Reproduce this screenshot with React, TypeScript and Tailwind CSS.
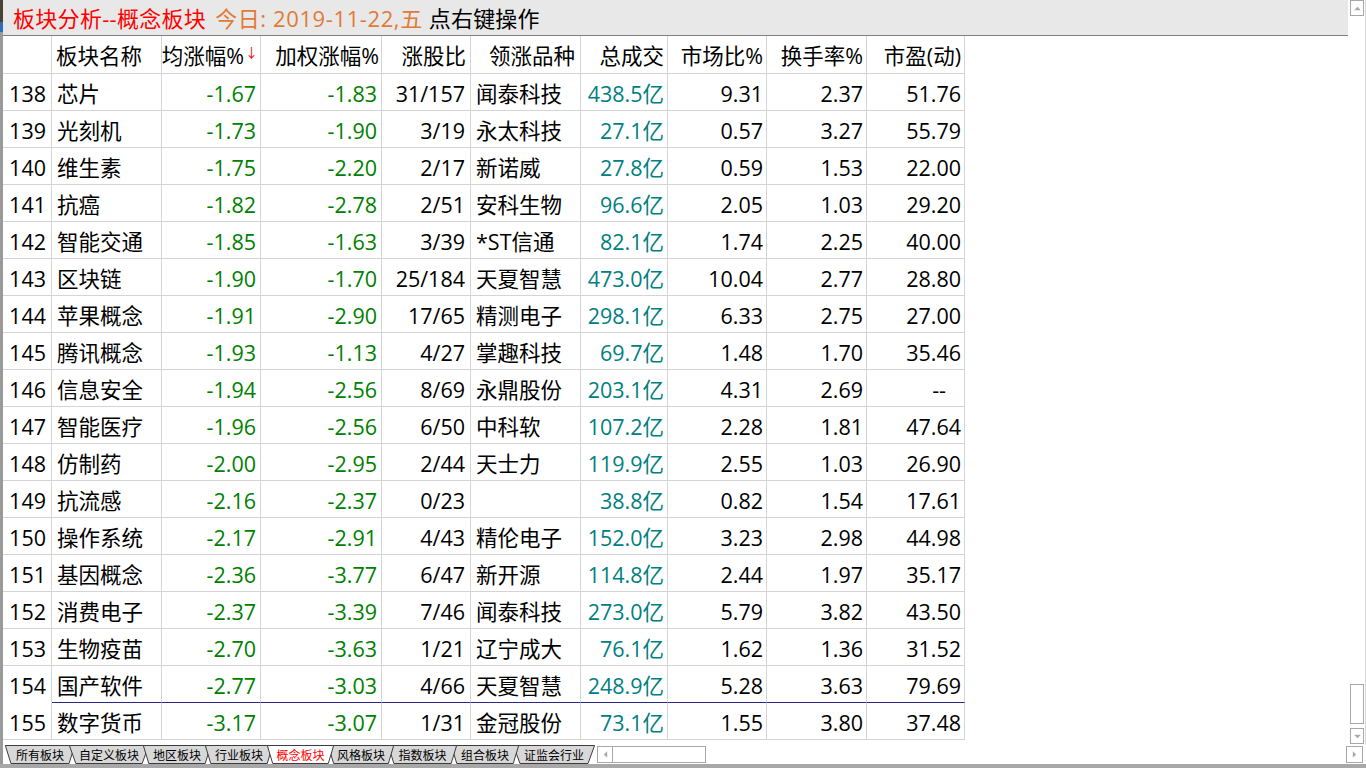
import React from "react";

type Row = [string, string, string, string, string, string, string, string, string, string];

const rows: Row[] = [
  ["138", "芯片", "-1.67", "-1.83", "31/157", "闻泰科技", "438.5亿", "9.31", "2.37", "51.76"],
  ["139", "光刻机", "-1.73", "-1.90", "3/19", "永太科技", "27.1亿", "0.57", "3.27", "55.79"],
  ["140", "维生素", "-1.75", "-2.20", "2/17", "新诺威", "27.8亿", "0.59", "1.53", "22.00"],
  ["141", "抗癌", "-1.82", "-2.78", "2/51", "安科生物", "96.6亿", "2.05", "1.03", "29.20"],
  ["142", "智能交通", "-1.85", "-1.63", "3/39", "*ST信通", "82.1亿", "1.74", "2.25", "40.00"],
  ["143", "区块链", "-1.90", "-1.70", "25/184", "天夏智慧", "473.0亿", "10.04", "2.77", "28.80"],
  ["144", "苹果概念", "-1.91", "-2.90", "17/65", "精测电子", "298.1亿", "6.33", "2.75", "27.00"],
  ["145", "腾讯概念", "-1.93", "-1.13", "4/27", "掌趣科技", "69.7亿", "1.48", "1.70", "35.46"],
  ["146", "信息安全", "-1.94", "-2.56", "8/69", "永鼎股份", "203.1亿", "4.31", "2.69", "--"],
  ["147", "智能医疗", "-1.96", "-2.56", "6/50", "中科软", "107.2亿", "2.28", "1.81", "47.64"],
  ["148", "仿制药", "-2.00", "-2.95", "2/44", "天士力", "119.9亿", "2.55", "1.03", "26.90"],
  ["149", "抗流感", "-2.16", "-2.37", "0/23", "", "38.8亿", "0.82", "1.54", "17.61"],
  ["150", "操作系统", "-2.17", "-2.91", "4/43", "精伦电子", "152.0亿", "3.23", "2.98", "44.98"],
  ["151", "基因概念", "-2.36", "-3.77", "6/47", "新开源", "114.8亿", "2.44", "1.97", "35.17"],
  ["152", "消费电子", "-2.37", "-3.39", "7/46", "闻泰科技", "273.0亿", "5.79", "3.82", "43.50"],
  ["153", "生物疫苗", "-2.70", "-3.63", "1/21", "辽宁成大", "76.1亿", "1.62", "1.36", "31.52"],
  ["154", "国产软件", "-2.77", "-3.03", "4/66", "天夏智慧", "248.9亿", "5.28", "3.63", "79.69"],
  ["155", "数字货币", "-3.17", "-3.07", "1/31", "金冠股份", "73.1亿", "1.55", "3.80", "37.48"],
];

// per-column alignment / colour classes
const colCls = [
  "justify-end pr-[5px] text-black",
  "justify-start pl-[5px] text-black",
  "justify-end pr-[4px] text-[#008000]",
  "justify-end pr-[4px] text-[#008000]",
  "justify-end pr-[5px] text-black",
  "justify-start pl-[5px] text-black",
  "justify-end pr-[3px] text-[#008080]",
  "justify-end pr-[3px] text-black",
  "justify-end pr-[3px] text-black",
  "justify-end pr-[3px] text-black",
];

const tabs = [
  { label: "所有板块", w: "w-[70px]", z: "z-[1]" },
  { label: "自定义板块", w: "w-[80px]", z: "z-[2]" },
  { label: "地区板块", w: "w-[68px]", z: "z-[3]" },
  { label: "行业板块", w: "w-[68px]", z: "z-[4]" },
  { label: "概念板块", w: "w-[67px]", z: "z-[20]", active: true },
  { label: "风格板块", w: "w-[66px]", z: "z-[9]" },
  { label: "指数板块", w: "w-[69px]", z: "z-[8]" },
  { label: "组合板块", w: "w-[68px]", z: "z-[7]" },
  { label: "证监会行业", w: "w-[82px]", z: "z-[6]" },
];

function TabShape({ active }: { active?: boolean }) {
  return (
    <svg className="absolute inset-0 w-full h-full" preserveAspectRatio="none" viewBox="0 0 100 19">
      <polygon
        points="0.5,0.5 99.5,0.5 91.5,18.5 8.5,18.5"
        fill={active ? "#ffffff" : "#d8d8d8"}
        stroke="#3c3c3c"
        strokeWidth="1"
        vectorEffect="non-scaling-stroke"
      />
    </svg>
  );
}

function Arrow({ dir }: { dir: "up" | "down" | "left" | "right" }) {
  const pts =
    dir === "up"
      ? "1,5 5,1 9,5"
      : dir === "down"
      ? "1,1 5,5 9,1"
      : dir === "left"
      ? "5,1 1,5 5,9"
      : "1,1 5,5 1,9";
  const vb = dir === "up" || dir === "down" ? "0 0 10 6" : "0 0 6 10";
  const cls = dir === "up" || dir === "down" ? "w-[9px] h-[5px]" : "w-[5px] h-[9px]";
  return (
    <svg viewBox={vb} className={cls}>
      <polygon points={pts} fill="#a8a8a8" />
    </svg>
  );
}

export default function App() {
  const font = "font-['Open_Sans','Noto_Sans_CJK_SC',sans-serif]";
  return (
    <div className={`w-[1366px] h-[768px] bg-white flex flex-col overflow-hidden ${font}`}>
      {/* upper area */}
      <div className="flex h-[745px]">
        {/* left strip */}
        <div className="w-[3px] flex flex-col bg-[#8c8c8c]">
          <div className="h-[22px] bg-[#4a4036]" />
          <div className="h-[10px] bg-[#2f6db5]" />
          <div className="flex-1 bg-[#9a9a9a]" />
        </div>

        {/* main */}
        <div className="flex-1 flex flex-col">
          {/* title */}
          <div className="h-[36px] bg-[#e8e8e8] border-b border-[#808080] flex items-center pl-[10px] pt-[1px] text-[22px] leading-none whitespace-nowrap">
            <span className="text-[#ff0000] tracking-[0.3px]">板块分析--概念板块</span>
            <span className="text-[#e07a36] ml-[9px] tracking-[0.6px]">今日: 2019-11-22,五</span>
            <span className="text-black ml-[6px] tracking-[0.2px]">点右键操作</span>
          </div>

          {/* table */}
          <div className="grid grid-cols-[49px_110px_99px_121px_89px_110px_87px_99px_100px_98px] w-[962px] text-[21.5px] leading-none whitespace-nowrap">
            {/* header */}
            <div className="h-[38px] border-r border-b border-[#d4d4d4]" />
            <div className="h-[38px] border-r border-b border-[#d4d4d4] flex items-center pt-[2px] pl-[4px]">板块名称</div>
            <div className="h-[38px] border-r border-b border-[#d4d4d4] flex items-center pt-[2px] justify-end pr-[2px]">
              <span>均涨幅%</span>
              <span className="text-[#ff0000] text-[13px] self-start mt-[8px] ml-[1px]">↓</span>
            </div>
            <div className="h-[38px] border-r border-b border-[#d4d4d4] flex items-center pt-[2px] justify-end pr-[2px]">加权涨幅%</div>
            <div className="h-[38px] border-r border-b border-[#d4d4d4] flex items-center pt-[2px] justify-end pr-[4px]">涨股比</div>
            <div className="h-[38px] border-r border-b border-[#d4d4d4] flex items-center pt-[2px] pl-[18px]">领涨品种</div>
            <div className="h-[38px] border-r border-b border-[#d4d4d4] flex items-center pt-[2px] justify-end pr-[3px]">总成交</div>
            <div className="h-[38px] border-r border-b border-[#d4d4d4] flex items-center pt-[2px] justify-end pr-[3px]">市场比%</div>
            <div className="h-[38px] border-r border-b border-[#d4d4d4] flex items-center pt-[2px] justify-end pr-[3px]">换手率%</div>
            <div className="h-[38px] border-r border-b border-[#d4d4d4] flex items-center pt-[2px] justify-end pr-[3px]">市盈(动)</div>

            {rows.map((r, ri) =>
              r.map((c, ci) => {
                const isSel = ri === rows.length - 2;
                const bcls = isSel
                  ? ci === 0
                    ? "border-b-white"
                    : "border-b-[#28288c]"
                  : "border-b-[#d4d4d4]";
                const extra = c === "--" ? "mr-[15px]" : "";
                return (
                  <div
                    key={`${ri}-${ci}`}
                    className={`h-[37px] pt-[3px] border-r border-b border-r-[#d4d4d4] ${bcls} flex items-center ${colCls[ci]}`}
                  >
                    <span className={extra}>{c}</span>
                  </div>
                );
              })
            )}
          </div>
        </div>

        {/* vertical scrollbar */}
        <div className="w-[18px] flex flex-col items-start pl-[2px] border-r border-[#d8d8d8]">
          <div className="w-[14px] h-[16px] border border-[#a8a8a8] bg-white flex items-center justify-center">
            <Arrow dir="up" />
          </div>
          <div className="flex-1" />
          <div className="w-[14px] h-[40px] border border-[#a8a8a8] bg-white" />
          <div className="w-[14px] h-[16px] border border-[#a8a8a8] bg-white flex items-center justify-center mt-[4px] mb-[1px]">
            <Arrow dir="down" />
          </div>
        </div>
      </div>

      {/* tab bar */}
      <div className="flex h-[19px] font-['Noto_Sans_CJK_SC',sans-serif]">
        <div className="w-[3px] bg-[#9a9a9a]" />
        <div className="flex ml-[2px]">
          {tabs.map((t, i) => (
            <div
              key={t.label}
              className={`relative h-[19px] ${t.w} ${t.z} ${i > 0 ? "-ml-[6px]" : ""} flex items-center justify-center`}
            >
              <TabShape active={t.active} />
              <span
                className={`relative text-[12px] leading-none ${t.active ? "text-[#ff0000]" : "text-black"}`}
              >
                {t.label}
              </span>
            </div>
          ))}
        </div>
        {/* horizontal scrollbar */}
        <div className="flex-1 flex items-center ml-[2px] mr-[3px]">
          <div className="w-[16px] h-[17px] border border-[#a8a8a8] bg-white flex items-center justify-center">
            <Arrow dir="left" />
          </div>
          <div className="w-[93px] h-[17px] border border-l-0 border-[#a8a8a8] bg-white" />
          <div className="flex-1" />
          <div className="w-[17px] h-[17px] border border-[#a8a8a8] bg-white flex items-center justify-center">
            <Arrow dir="right" />
          </div>
        </div>
      </div>

      {/* bottom band */}
      <div className="flex-1 bg-[#a8a8a8]" />
    </div>
  );
}
